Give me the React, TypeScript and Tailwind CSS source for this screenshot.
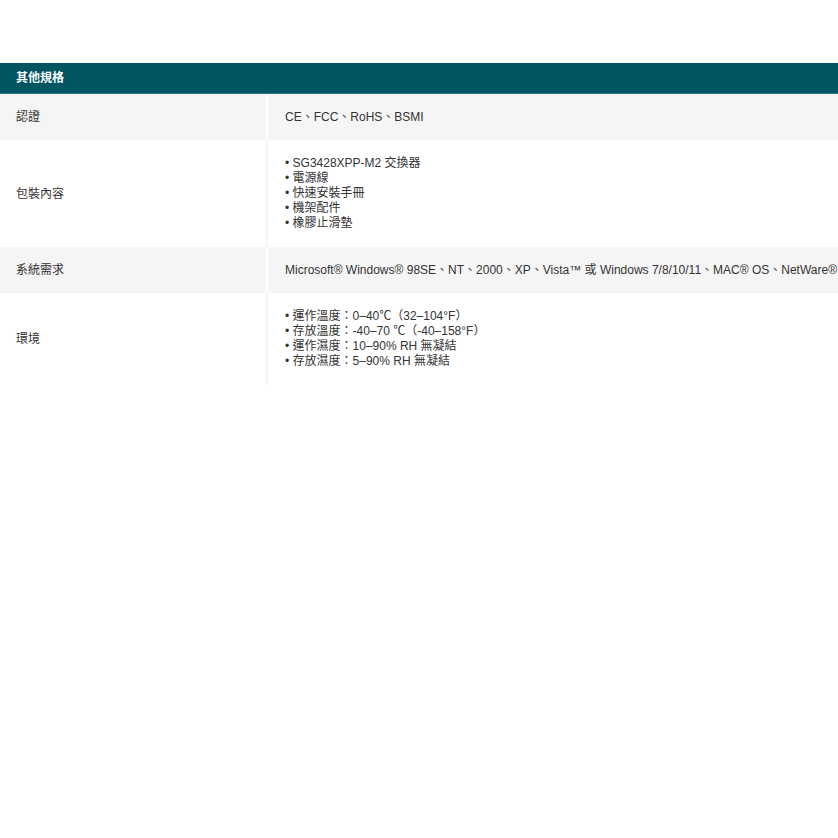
import React from 'react';

const rows: { label: string; items: string[]; list?: boolean; gray?: boolean }[] = [
  { label: '認證', items: ['CE、FCC、RoHS、BSMI'], gray: true },
  { label: '包裝內容', items: ['SG3428XPP-M2 交換器', '電源線', '快速安裝手冊', '機架配件', '橡膠止滑墊'], list: true },
  {
    label: '系統需求',
    items: ['Microsoft® Windows® 98SE、NT、2000、XP、Vista™ 或 Windows 7/8/10/11、MAC® OS、NetWare®、UNIX® 或 Linux'],
    gray: true,
  },
  {
    label: '環境',
    items: ['運作溫度：0–40℃（32–104°F）', '存放溫度：-40–70 ℃（-40–158°F）', '運作濕度：10–90% RH 無凝結', '存放濕度：5–90% RH 無凝結'],
    list: true,
  },
];

export default function App() {
  return (
    <div className="w-[838px] h-[838px] overflow-hidden bg-white text-[12px] text-[#333] pt-[63px]" style={{ fontFamily: '"Liberation Sans", Arial, "Noto Sans CJK TC", sans-serif' }}>
      <div className="bg-[#005562] h-[31px] flex items-center px-4 text-white font-bold border-b border-[#2a7480]">其他規格</div>
      {rows.map((r) => (
        <div key={r.label} className={`flex ${r.gray ? 'bg-[#f5f5f5] h-[46px]' : 'bg-white'}`}>
          <div className={`w-[268px] shrink-0 flex items-center px-4 border-r-2 ${r.gray ? 'border-white' : 'border-[#f5f5f5]'}`}>{r.label}</div>
          <div className={`flex-1 min-w-0 overflow-hidden flex flex-col justify-center pl-[17px] whitespace-nowrap ${r.list ? 'py-[16px] leading-[15px]' : ''}`}>
            {r.items.map((t) => (
              <div key={t}>{r.list ? '• ' : ''}{t}</div>
            ))}
          </div>
        </div>
      ))}
    </div>
  );
}
